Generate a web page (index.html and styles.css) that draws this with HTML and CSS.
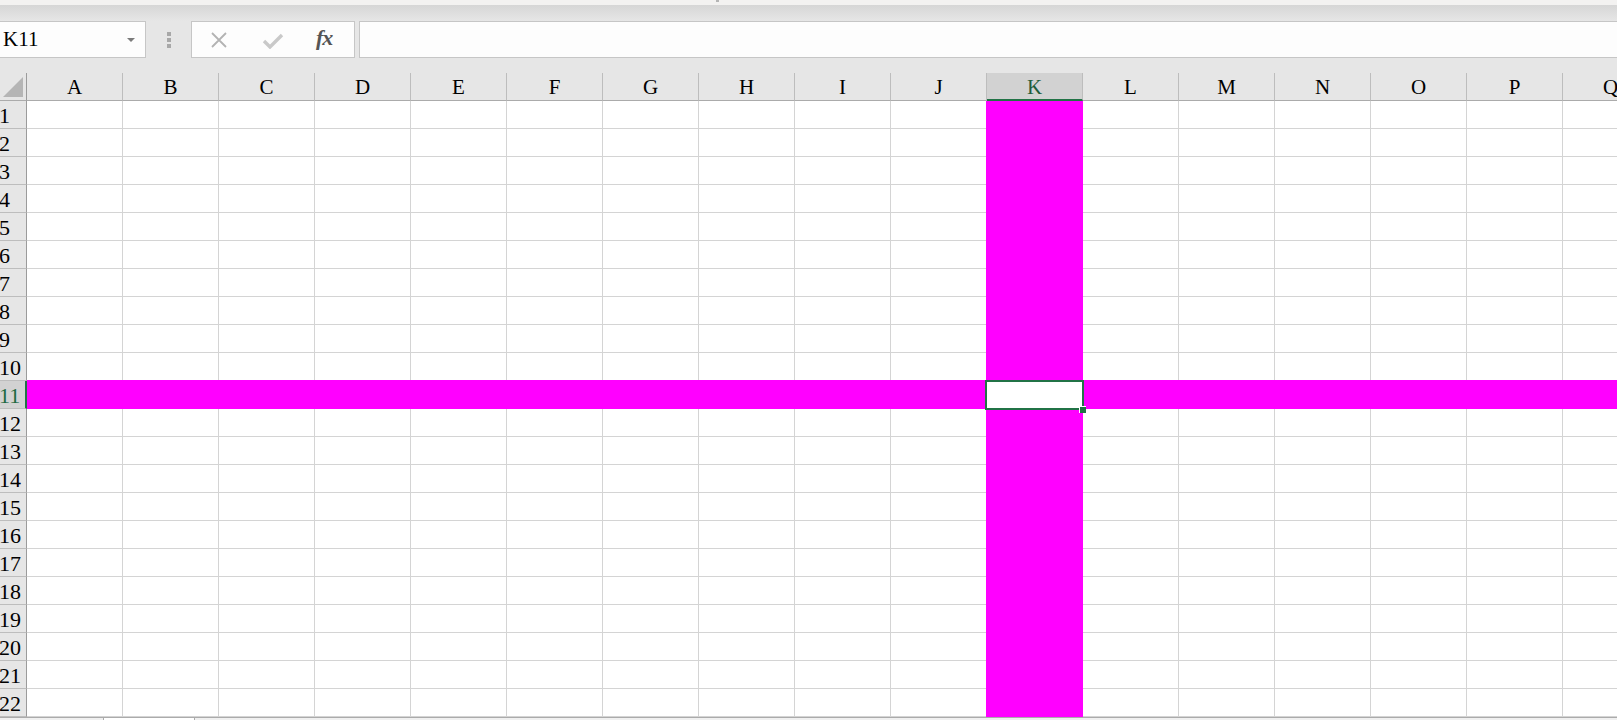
FILE: index.html
```html
<!DOCTYPE html>
<html lang="en">
<head>
    <meta charset="UTF-8">
    <title>Book1 - Excel</title>
    <link rel="stylesheet" href="styles.css">
</head>
<body>
    <div class="toolbar">
        <div class="title-mark"></div>
        <div class="formula-row">
            <div class="name-box">
                <span>K11</span>
                <span class="caret"></span>
            </div>
            <div class="grip">
                <i></i><i></i><i></i>
            </div>
            <div class="fx-buttons">
                <svg class="icon-cancel" width="18" height="16" viewBox="0 0 18 16">
                    <path d="M2 1 L16 15 M16 1 L2 15" stroke="#b3b3b3" stroke-width="1.8" fill="none"/>
                </svg>
                <svg class="icon-enter" width="22" height="16" viewBox="0 0 22 16">
                    <path d="M2 8 L8 14 L20 2" stroke="#c9c9c9" stroke-width="3.4" fill="none"/>
                </svg>
                <span class="fx">fx</span>
            </div>
            <div class="formula-input"></div>
        </div>
    </div>

    <div class="sheet">
        <div id="grid" class="grid"></div>
        <div class="selection">
            <div class="fill-handle"></div>
        </div>
    </div>

    <div class="footer">
        <div class="tab-strip"></div>
        <div class="scroll-strip"></div>
    </div>

    <script>
        // build the cell grid: 22 rows, columns A..Q
        var letters = 'ABCDEFGHIJKLMNOPQ'.split('');
        var grid = document.getElementById('grid');
        var html = '<div class="corner"><span></span></div>';

        letters.forEach(function(l) {
            html += '<div class="col-head' + (l === 'K' ? ' active' : '') + '">' + l + '</div>';
        });

        for (var r = 1; r <= 22; r++) {
            html += '<div class="row-head' + (r === 11 ? ' active' : '') + '">' + r + '</div>';
            letters.forEach(function(l) {
                var cls = 'cell';
                if (r === 11) cls += ' band-row';
                else if (l === 'K') cls += r === 1 ? ' band-col first' : ' band-col';
                html += '<div class="' + cls + '"></div>';
            });
        }
        grid.innerHTML = html;
    </script>
</body>
</html>
```

FILE: styles.css
```css
body {
    margin: 0;
    width: 1617px;
    height: 720px;
    overflow: hidden;
    background-color: #ffffff;
    font-family: "Liberation Serif", "Times New Roman", serif;
    color: #000;
}
.toolbar {
    position: relative;
    height: 73px;
    background: linear-gradient(#f3f2f1 0, #f3f2f1 5px, #d6d6d6 5px, #e3e3e3 18px, #e6e6e6 21px, #e6e6e6 100%);
}
.title-mark {
    position: absolute;
    left: 716px;
    top: 0;
    width: 3px;
    height: 2px;
    background-color: #b5b5b5;
}
.formula-row {
    display: flex;
    padding-top: 21px;
    height: 37px;
}
.name-box {
    box-sizing: border-box;
    width: 147px;
    height: 37px;
    margin-left: -1px;
    display: flex;
    align-items: center;
    justify-content: space-between;
    padding: 0 10px 0 3px;
    background-color: #fdfdfd;
    border: 1px solid #c6c6c6;
    font-family: "Liberation Serif", serif;
    font-size: 21px;
}
.caret {
    width: 0;
    height: 0;
    border-left: 4px solid transparent;
    border-right: 4px solid transparent;
    border-top: 4px solid #7b7b7b;
    margin-top: 1px;
}
.grip {
    width: 45px;
    display: flex;
    flex-direction: column;
    align-items: center;
    justify-content: center;
    gap: 2px;
}
.grip i {
    width: 4px;
    height: 4px;
    background-color: #a8a8a8;
}
.fx-buttons {
    box-sizing: border-box;
    width: 164px;
    height: 37px;
    display: flex;
    align-items: center;
    background-color: #fdfdfd;
    border: 1px solid #c6c6c6;
}
.icon-cancel {
    margin-left: 18px;
}
.icon-enter {
    margin-left: 34px;
    margin-top: 2px;
}
.fx {
    margin-left: 32px;
    font-style: italic;
    font-weight: bold;
    font-size: 22px;
    letter-spacing: -1px;
    color: #555555;
    margin-top: -3px;
}
.formula-input {
    box-sizing: border-box;
    flex: 1;
    height: 37px;
    margin-left: 4px;
    margin-right: -4px;
    background-color: #fdfdfd;
    border: 1px solid #c6c6c6;
}
.sheet {
    position: relative;
    height: 644px;
    overflow: hidden;
}
.grid {
    display: grid;
    grid-template-columns: 27px repeat(17, 96px);
    grid-auto-rows: 28px;
    width: 1659px;
}
.grid > div {
    box-sizing: border-box;
}
.corner {
    position: relative;
    background-color: #e6e6e6;
    border-right: 1px solid #9b9b9b;
    border-bottom: 1px solid #ababab;
}
.corner span {
    position: absolute;
    right: 3px;
    bottom: 3px;
    width: 0;
    height: 0;
    border-left: 20px solid transparent;
    border-bottom: 20px solid #b5b5b5;
}
.col-head {
    background-color: #e6e6e6;
    border-right: 1px solid #bdbdbd;
    border-bottom: 1px solid #ababab;
    text-align: center;
    font-size: 21px;
    line-height: 29px;
}
.col-head.active {
    background-color: #d2d2d2;
    border-bottom: 2px solid #217346;
    color: #1f5c3a;
}
.row-head {
    background-color: #e6e6e6;
    border-right: 1px solid #9b9b9b;
    border-bottom: 1px solid #bdbdbd;
    font-size: 22px;
    line-height: 29px;
    white-space: nowrap;
    text-indent: -1px;
}
.row-head.active {
    background-color: #d2d2d2;
    border-right: 2px solid #217346;
    color: #1f6a42;
}
.cell {
    border-right: 1px solid #d4d4d4;
    border-bottom: 1px solid #d4d4d4;
}
.band-row {
    background-color: #ff00ff;
    border-color: #ff00ff;
    box-shadow: 0 -1px 0 #ff00ff;
}
.band-col {
    background-color: #ff00ff;
    border-color: #ff00ff;
    box-shadow: 0 -1px 0 #ff00ff, -1px 0 0 #ff00ff, -1px -1px 0 #ff00ff;
}
.band-col.first {
    box-shadow: -1px 0 0 #ff00ff;
}
.selection {
    position: absolute;
    left: 985px;
    top: 307px;
    width: 99px;
    height: 30px;
    box-sizing: border-box;
    border: 2px solid #217346;
    background-color: #ffffff;
}
.fill-handle {
    position: absolute;
    right: -4px;
    bottom: -5px;
    width: 7px;
    height: 7px;
    box-sizing: border-box;
    background-color: #217346;
    border-left: 1px solid #ffffff;
    border-top: 1px solid #ffffff;
}
.footer {
    display: flex;
    height: 3px;
    border-top: 1px solid #ababab;
    background-color: #ffffff;
}
.tab-strip {
    width: 103px;
    background-color: #f0f0f0;
    border-right: 1px solid #ababab;
}
.scroll-strip {
    flex: 1;
    margin-left: 90px;
    background-color: #f0f0f0;
    border-left: 1px solid #ababab;
}
```
